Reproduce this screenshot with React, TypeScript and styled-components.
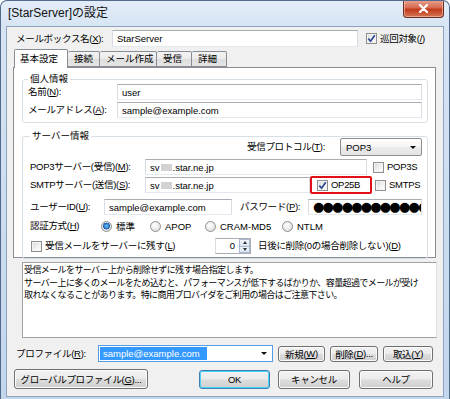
import styled, { createGlobalStyle } from 'styled-components'

const FONT = `"Liberation Sans", "Noto Sans CJK JP", sans-serif`

const GlobalStyle = createGlobalStyle`
  html, body {
    margin: 0;
    padding: 0;
    background: #ffffff;
  }
  * {
    box-sizing: border-box;
  }
`

const Window = styled.div`
  width: 450px;
  height: 399px;
  display: flex;
  flex-direction: column;
  background: linear-gradient(180deg, #e3edf8 0px, #d6e4f3 26px, #c2d6ec 100%);
  border: 1px solid #53698a;
  border-bottom: none;
  border-radius: 7px 7px 0 0;
  overflow: hidden;
  font-family: ${FONT};
  font-size: 9.5px;
  color: #000;
`

const TitleBar = styled.div`
  height: 25px;
  display: flex;
  align-items: flex-start;
  padding-left: 7px;
`

const TitleText = styled.div`
  font-size: 12px;
  line-height: 25px;
  color: #111;
`

const CloseButton = styled.div`
  margin-left: auto;
  margin-right: 5px;
  margin-top: -1px;
  width: 41px;
  height: 18px;
  border: 1px solid #6e2d21;
  border-top: none;
  border-radius: 0 0 4px 4px;
  background: linear-gradient(180deg, #e8a595 0%, #d76a50 45%, #c23a1c 55%, #d27552 100%);
  box-shadow: inset 0 0 0 1px rgba(255, 220, 210, 0.5);
  display: flex;
  align-items: center;
  justify-content: center;
`

const Client = styled.div`
  flex: 1;
  margin: 0 5px 2px 5px;
  border: 1px solid #8ea3bf;
  background: #f0f0f0;
  padding-top: 3px;
  display: flex;
  flex-direction: column;
`

const Row = styled.div<{ $h?: number; $mt?: number; $pl?: number; $end?: boolean }>`
  display: flex;
  align-items: center;
  height: ${p => p.$h ?? 16}px;
  margin-top: ${p => p.$mt ?? 0}px;
  padding-left: ${p => p.$pl ?? 0}px;
  justify-content: ${p => (p.$end ? 'flex-end' : 'flex-start')};
  white-space: nowrap;
`

const Label = styled.span<{ $w?: number; $ml?: number; $mr?: number }>`
  display: inline-block;
  width: ${p => (p.$w ? `${p.$w}px` : 'auto')};
  margin-left: ${p => p.$ml ?? 0}px;
  margin-right: ${p => p.$mr ?? 0}px;
  flex-shrink: 0;
  font-size: 9.5px;
  line-height: 12px;
  letter-spacing: -0.3px;
`

const U = styled.span`
  text-decoration: underline;
`

const Field = styled.div<{ $w: number; $h?: number }>`
  width: ${p => p.$w}px;
  height: ${p => p.$h ?? 16}px;
  flex-shrink: 0;
  background: #ffffff;
  border: 1px solid #abadb3;
  border-left-color: #dadce3;
  border-right-color: #dadce3;
  border-bottom-color: #e3e9ef;
  padding-left: 4px;
  display: flex;
  align-items: center;
  font-size: 9.5px;
  overflow: hidden;
  white-space: nowrap;
`

const Redact = styled.span`
  display: inline-block;
  width: 11px;
  height: 7px;
  margin: 0 1px;
  background: #d2d2d2;
  filter: blur(0.6px);
`

const Dots = styled.span`
  font-family: "DejaVu Sans", sans-serif;
  font-size: 13px;
  letter-spacing: -1.8px;
  line-height: 14px;
`

const CheckBox = styled.span<{ $ml?: number }>`
  width: 11px;
  height: 11px;
  margin-left: ${p => p.$ml ?? 0}px;
  margin-right: 3px;
  flex-shrink: 0;
  border: 1px solid #8f8f8f;
  background: linear-gradient(135deg, #d6d6d6 0%, #f4f4f4 60%, #ffffff 100%);
  box-shadow: inset 0 0 0 1px #f4f4f4;
  display: inline-flex;
  align-items: center;
  justify-content: center;
`

const Check = () => (
  <svg width="9" height="9" viewBox="0 0 9 9">
    <path d="M1.3 4.6 L3.6 7.2 L7.8 1.2" fill="none" stroke="#29488d" strokeWidth="1.7" />
  </svg>
)

const RadioDot = styled.span<{ $on?: boolean }>`
  width: 11px;
  height: 11px;
  border-radius: 50%;
  flex-shrink: 0;
  margin-right: 4px;
  border: 1px solid #8f8f8f;
  background: ${p =>
    p.$on
      ? 'radial-gradient(circle at 50% 45%, #7dc4f5 0%, #2b7fd2 35%, #1d5c9f 48%, #e9e9e9 55%, #d4d4d4 100%)'
      : 'radial-gradient(circle at 40% 35%, #ffffff 0%, #ececec 50%, #cfcfcf 100%)'};
`

const RadioItem = styled.span<{ $w?: number }>`
  display: inline-flex;
  align-items: center;
  width: ${p => (p.$w ? `${p.$w}px` : 'auto')};
  flex-shrink: 0;
`

const Tabs = styled.div`
  display: flex;
  align-items: flex-end;
  height: 17px;
  margin-top: 3px;
  margin-left: 7px;
`

const Tab = styled.div<{ $w: number; $active?: boolean }>`
  width: ${p => p.$w}px;
  height: ${p => (p.$active ? 19 : 16)}px;
  margin-bottom: ${p => (p.$active ? -1 : 0)}px;
  position: relative;
  z-index: ${p => (p.$active ? 2 : 1)};
  border: 1px solid #898c95;
  border-bottom: ${p => (p.$active ? 'none' : '1px solid #898c95')};
  border-left: ${p => (p.$active ? '1px solid #898c95' : 'none')};
  border-radius: 2px 2px 0 0;
  background: ${p => (p.$active ? '#ffffff' : 'linear-gradient(180deg, #f3f3f3 0%, #ebebeb 50%, #dedede 51%, #e5e5e5 100%)')};
  font-size: 9.5px;
  line-height: 14px;
  padding-left: ${p => (p.$active ? 5 : 6)}px;
  padding-top: ${p => (p.$active ? 2 : 0)}px;
`

const Panel = styled.div`
  margin-left: 6px;
  width: 423px;
  height: 191px;
  background: #ffffff;
  border: 1px solid #898c95;
  padding: 6px 7px 0 8px;
`

const Group = styled.fieldset<{ $mt?: number; $pl: number }>`
  margin: ${p => p.$mt ?? 0}px 0 0 0;
  padding: 0 5px 4px ${p => p.$pl}px;
  min-width: 0;
  border: 1px solid #d5dfe5;
  border-radius: 3px;
`

const Legend = styled.legend`
  padding: 0 2px;
  font-size: 9.5px;
  line-height: 10px;
`

const Select = styled.div<{ $w: number }>`
  width: ${p => p.$w}px;
  height: 18px;
  flex-shrink: 0;
  border: 1px solid #8d8d8d;
  border-radius: 2px;
  background: linear-gradient(180deg, #ffffff 0%, #f4f4f4 50%, #ebebeb 51%, #e4e4e4 100%);
  display: flex;
  align-items: center;
  padding: 0 5px 0 5px;
  font-size: 9.5px;
`

const Arrow = styled.span<{ $size?: number }>`
  margin-left: auto;
  width: 0;
  height: 0;
  border-left: ${p => p.$size ?? 3.5}px solid transparent;
  border-right: ${p => p.$size ?? 3.5}px solid transparent;
  border-top: ${p => p.$size ?? 3.5}px solid #111;
`

const Annot = styled.span`
  display: inline-flex;
  align-items: center;
  width: 62px;
  height: 18px;
  flex-shrink: 0;
  border: 2px solid #e3101a;
  border-radius: 2px;
  padding-left: 5px;
  margin-right: 3px;
`

const Spin = styled.div`
  display: flex;
  width: 36px;
  height: 16px;
  flex-shrink: 0;
  margin-left: 24px;
  margin-right: 7px;
  border: 1px solid #abadb3;
  border-left-color: #dadce3;
  background: #fff;
`

const SpinValue = styled.div`
  flex: 1;
  text-align: right;
  padding-right: 4px;
  line-height: 14px;
  font-size: 9.5px;
`

const SpinButtons = styled.div`
  width: 11px;
  display: flex;
  flex-direction: column;
`

const SpinHalf = styled.div<{ $up?: boolean }>`
  flex: 1;
  border: 1px solid #a9b9cf;
  border-top: ${p => (p.$up ? '1px solid #a9b9cf' : 'none')};
  background: linear-gradient(180deg, #f2f6fb, #d9e4f2);
  display: flex;
  align-items: center;
  justify-content: center;
  &::after {
    content: '';
    width: 0;
    height: 0;
    border-left: 2.5px solid transparent;
    border-right: 2.5px solid transparent;
    ${p => (p.$up ? 'border-bottom: 3px solid #333;' : 'border-top: 3px solid #333;')}
  }
`

const Desc = styled.div`
  margin-top: 4px;
  margin-left: 15px;
  width: 415px;
  height: 76px;
  background: #ffffff;
  border: 1px solid #a0a0a0;
  border-right-color: #e0e0e0;
  padding: 1px 0 0 1px;
  font-size: 9px;
  line-height: 12.5px;
  letter-spacing: -0.6px;
  white-space: nowrap;
  overflow: hidden;
`

const Combo = styled.div`
  width: 175px;
  height: 17px;
  flex-shrink: 0;
  border: 1px solid #569de5;
  background: #ffffff;
  display: flex;
  align-items: center;
  padding: 1px 5px 1px 1px;
`

const Highlight = styled.span`
  display: inline-block;
  width: 107px;
  height: 13px;
  line-height: 13px;
  background: #3399ff;
  color: #ffffff;
  padding-left: 3px;
  font-size: 9.5px;
`

const Button = styled.div<{ $w: number; $h?: number; $ml?: number; $default?: boolean }>`
  width: ${p => p.$w}px;
  height: ${p => p.$h ?? 16}px;
  margin-left: ${p => p.$ml ?? 0}px;
  flex-shrink: 0;
  border: 1px solid ${p => (p.$default ? '#3c7fb1' : '#707070')};
  border-radius: 3px;
  background: linear-gradient(180deg, #f2f2f2 0%, #ebebeb 48%, #dddddd 52%, #cfcfcf 100%);
  box-shadow: inset 0 0 0 1px ${p => (p.$default ? '#48d2fc' : '#fbfbfb')};
  display: flex;
  align-items: center;
  justify-content: center;
  font-size: 9.5px;
  letter-spacing: -0.3px;
`

export default function App() {
  return (
    <>
      <GlobalStyle />
      <Window>
        <TitleBar>
          <TitleText>[StarServer]の設定</TitleText>
          <CloseButton>
            <svg width="11" height="9" viewBox="0 0 11 9">
              <path d="M2 1 L9 8 M9 1 L2 8" stroke="#ffffff" strokeWidth="2.2" strokeLinecap="round" />
            </svg>
          </CloseButton>
        </TitleBar>

        <Client>
          <Row $h={17} $pl={9}>
            <Label $w={96}>メールボックス名(<U>X</U>):</Label>
            <Field $w={246} $h={17}>StarServer</Field>
            <CheckBox $ml={8}><Check /></CheckBox>
            <Label>巡回対象(<U>/</U>)</Label>
          </Row>

          <Tabs>
            <Tab $w={54} $active>基本設定</Tab>
            <Tab $w={32}>接続</Tab>
            <Tab $w={57}>メール作成</Tab>
            <Tab $w={35}>受信</Tab>
            <Tab $w={35}>詳細</Tab>
          </Tabs>

          <Panel>
            <Group $pl={5}>
              <Legend>個人情報</Legend>
              <Row>
                <Label $w={89}>名前(<U>N</U>):</Label>
                <Field $w={305}>user</Field>
              </Row>
              <Row $mt={2}>
                <Label $w={89}>メールアドレス(<U>A</U>):</Label>
                <Field $w={305}>sample@example.com</Field>
              </Row>
            </Group>

            <Group $mt={8} $pl={7}>
              <Legend>サーバー情報</Legend>
              <Row $h={18} $mt={-3} $end>
                <Label $mr={15}>受信プロトコル(<U>T</U>):</Label>
                <Select $w={82}>
                  POP3
                  <Arrow />
                </Select>
              </Row>
              <Row $mt={3}>
                <Label $w={115}>POP3サーバー(受信)(<U>M</U>):</Label>
                <Field $w={222}>sv<Redact />.star.ne.jp</Field>
                <CheckBox $ml={6} />
                <Label>POP3S</Label>
              </Row>
              <Row $mt={2}>
                <Label $w={115}>SMTPサーバー(送信)(<U>S</U>):</Label>
                <Field $w={165}>sv<Redact />.star.ne.jp</Field>
                <Annot>
                  <CheckBox><Check /></CheckBox>
                  <Label>OP25B</Label>
                </Annot>
                <CheckBox />
                <Label>SMTPS</Label>
              </Row>
              <Row $mt={6}>
                <Label $w={74}>ユーザーID(<U>U</U>):</Label>
                <Field $w={128}>sample@example.com</Field>
                <Label $w={68} $ml={8}>パスワード(<U>P</U>):</Label>
                <Field $w={114}>
                  <Dots>●●●●●●●●●●●●</Dots>
                </Field>
              </Row>
              <Row $h={14} $mt={4}>
                <Label $w={71}>認証方式(<U>H</U>)</Label>
                <RadioItem $w={49}>
                  <RadioDot $on />
                  標準
                </RadioItem>
                <RadioItem $w={55}>
                  <RadioDot />
                  APOP
                </RadioItem>
                <RadioItem $w={77}>
                  <RadioDot />
                  CRAM-MD5
                </RadioItem>
                <RadioItem>
                  <RadioDot />
                  NTLM
                </RadioItem>
              </Row>
              <Row $mt={5}>
                <CheckBox $ml={1} />
                <Label $w={146}>受信メールをサーバーに残す(<U>L</U>)</Label>
                <Spin>
                  <SpinValue>0</SpinValue>
                  <SpinButtons>
                    <SpinHalf $up />
                    <SpinHalf />
                  </SpinButtons>
                </Spin>
                <Label>日後に削除(0の場合削除しない)(<U>D</U>)</Label>
              </Row>
            </Group>
          </Panel>

          <Desc>
            受信メールをサーバー上から削除せずに残す場合指定します。
            <br />
            サーバー上に多くのメールをため込むと、パフォーマンスが低下するばかりか、容量超過でメールが受け
            <br />
            取れなくなることがあります。特に商用プロバイダをご利用の場合はご注意下さい。
          </Desc>

          <Row $h={17} $mt={7} $pl={9}>
            <Label $w={82}>プロファイル(<U>R</U>):</Label>
            <Combo>
              <Highlight>sample@example.com</Highlight>
              <Arrow $size={3} />
            </Combo>
            <Button $w={47} $ml={5}>新規(<U>W</U>)</Button>
            <Button $w={48} $ml={5}>削除(<U>D</U>)...</Button>
            <Button $w={50} $ml={5}>取込(<U>Y</U>)</Button>
          </Row>

          <Row $h={20} $mt={7} $pl={7}>
            <Button $w={134} $h={20}>グローバルプロファイル(<U>G</U>)...</Button>
            <Button $w={71} $h={19} $ml={51} $default>OK</Button>
            <Button $w={72} $h={19} $ml={8}>キャンセル</Button>
            <Button $w={74} $h={19} $ml={9}>ヘルプ</Button>
          </Row>
        </Client>
      </Window>
    </>
  )
}
